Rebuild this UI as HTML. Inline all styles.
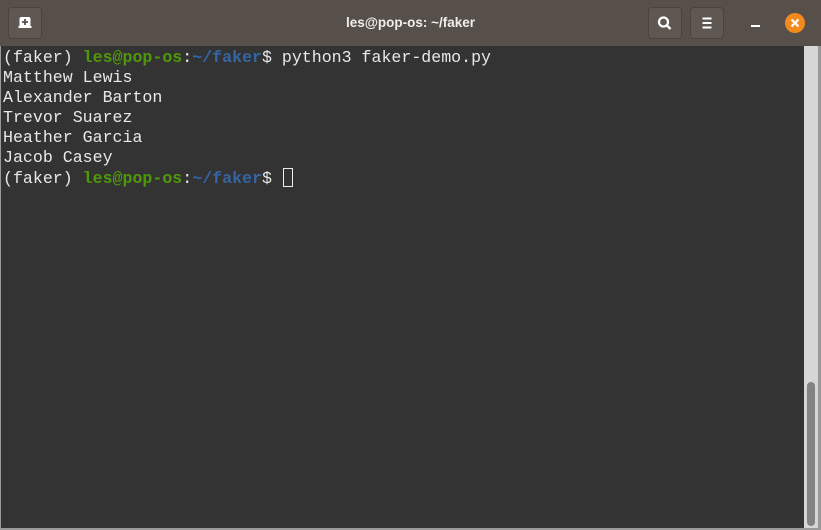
<!DOCTYPE html>
<html><head><style>
html,body{margin:0;padding:0;width:821px;height:530px;overflow:hidden;background:#9a9a9a;}
#hdr{position:absolute;left:0;top:0;width:821px;height:46px;background:#574f4a;}
.btn{position:absolute;top:7px;width:34px;height:32px;border-radius:4px;background:#5f5752;border:1px solid #4a433f;box-sizing:border-box;}
#title{position:absolute;left:0;width:821px;top:15px;text-align:center;font:bold 13.5px "Liberation Sans",sans-serif;color:#f0eeec;}
#term{position:absolute;left:1px;top:46px;width:803px;height:482px;background:#333333;}
#trough{position:absolute;left:804px;top:46px;width:14px;height:482px;background:#d6d6d6;}
#thumb{position:absolute;left:807px;top:382px;width:8px;height:144px;border-radius:4px;background:#838383;}
pre{margin:0;position:absolute;left:3px;top:48px;font:16.6px/20px "Liberation Mono",monospace;color:#e8e8e8;}
.g{color:#4e9a06;font-weight:bold}.b{color:#3465a4;font-weight:bold}
.cur{display:inline-block;width:10px;height:19px;border:1px solid #eee;box-sizing:border-box;vertical-align:-4px;margin-left:1px}
</style></head><body>
<div id="hdr">
<div class="btn" style="left:8px"><svg width="34" height="32" viewBox="0 0 34 32" style="position:absolute;left:-1px;top:-1px"><path d="M10.5 21h13v-2h-1v-7a2 2 0 0 0-2-2h-7a2 2 0 0 0-2 2v7h-1z" fill="#fff"/><path d="M17 12v6M14 15h6" stroke="#574f4a" stroke-width="1.8"/></svg></div>
<div id="title">les@pop-os: ~/faker</div>
<div class="btn" style="left:648px"><svg width="34" height="32" viewBox="0 0 34 32" style="position:absolute;left:-1px;top:-1px"><circle cx="15.5" cy="15" r="4.5" fill="none" stroke="#fff" stroke-width="2.2"/><path d="M18.8 18.3l3.7 3.7" stroke="#fff" stroke-width="2.4"/></svg></div>
<div class="btn" style="left:690px"><svg width="34" height="32" viewBox="0 0 34 32" style="position:absolute;left:-1px;top:-1px"><path d="M12.5 11.5h9M12.5 16h9M12.5 20.5h9" stroke="#fff" stroke-width="2"/></svg></div>
<div style="position:absolute;left:751px;top:25px;width:9px;height:2px;background:#fff"></div>
<svg width="20" height="20" style="position:absolute;left:785px;top:13px"><circle cx="10" cy="10" r="10" fill="#f28a1e"/><path d="M6.5 6.5l7 7M13.5 6.5l-7 7" stroke="#fff" stroke-width="2.2"/></svg>
</div>
<div id="term"></div>
<div id="trough"></div><div id="thumb"></div>
<pre>(faker) <span class="g">les@pop-os</span>:<span class="b">~/faker</span>$ python3 faker-demo.py
Matthew Lewis
Alexander Barton
Trevor Suarez
Heather Garcia
Jacob Casey
(faker) <span class="g">les@pop-os</span>:<span class="b">~/faker</span>$ <span class="cur"></span></pre>
</body></html>
